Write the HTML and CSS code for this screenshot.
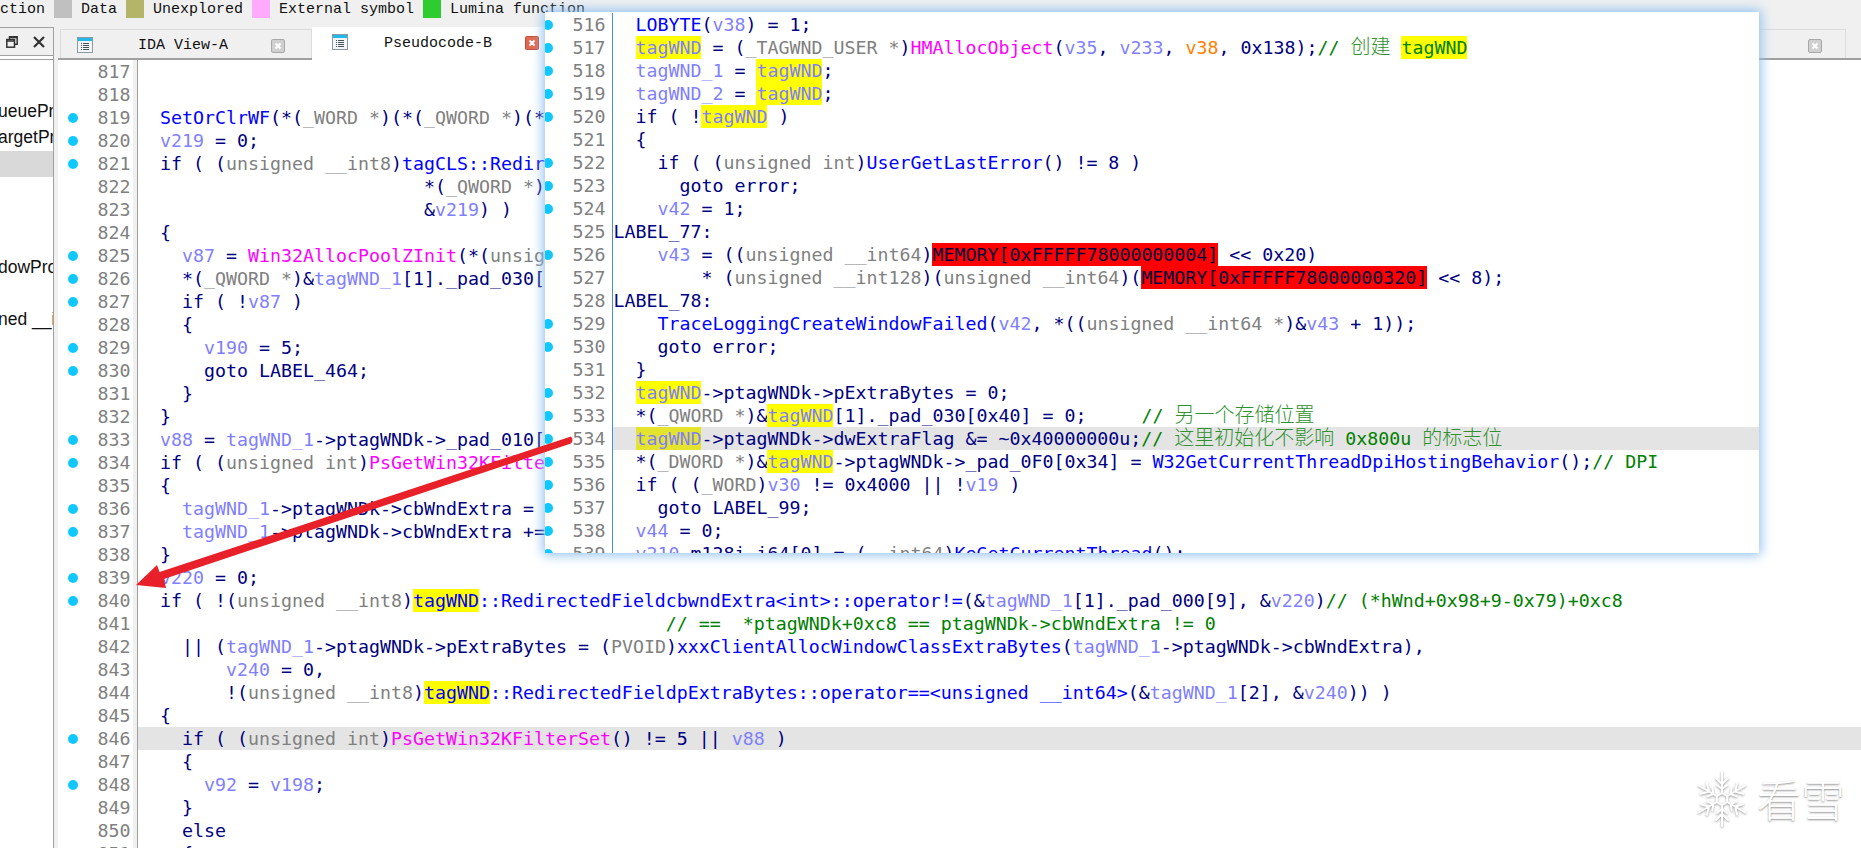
FILE: index.html
```html
<!DOCTYPE html>
<html lang="en">
<head>
<meta charset="utf-8">
<title>Pseudocode-B</title>
<link rel="stylesheet" href="styles.css">
</head>
<body>
<svg class="defs" width="0" height="0" aria-hidden="true"><defs>
<symbol id="tabicon" viewBox="0 0 16 16"><rect x=".5" y=".5" width="15" height="15" fill="#f2f4f6" stroke="#8b99a3"/><rect x="1" y="1" width="14" height="3" fill="#22b8e8"/><path d="M4 6.5h1M6 6.5h6M4 8.5h1M6 8.5h6M4 10.5h1M6 10.5h6M4 12.5h1M6 12.5h6" stroke="#44525c" fill="none"/></symbol>
<symbol id="closeicon" viewBox="0 0 14 14"><rect x=".5" y=".5" width="13" height="13" rx="1.5" fill="#d0d0d0" stroke="#a8a8a8"/><path d="M4.5 4.5l5 5M9.5 4.5l-5 5" stroke="#fff" stroke-width="2" fill="none"/></symbol>
<symbol id="closered" viewBox="0 0 14 14"><rect x=".5" y=".5" width="13" height="13" rx="1" fill="#e2694f" stroke="#b5533f"/><path d="M4.5 4.5l5 5M9.5 4.5l-5 5" stroke="#fff" stroke-width="2" fill="none"/></symbol>
</defs></svg>

<header class="legend">
  <span class="leg">ction</span><i class="sw sw-data"></i>
  <span class="leg">Data</span><i class="sw sw-unex"></i>
  <span class="leg">Unexplored</span><i class="sw sw-ext"></i>
  <span class="leg">External symbol</span><i class="sw sw-lum"></i>
  <span class="leg">Lumina function</span>
</header>

<div class="workspace">
  <aside class="side">
    <div class="side-head">
      <svg class="winbtn" viewBox="0 0 12 12"><path d="M3.5 3V.8h7.7v7.4H8.5" fill="none" stroke="#333" stroke-width="1.5"/><rect x=".8" y="3.5" width="7.7" height="7.7" fill="none" stroke="#333" stroke-width="1.5"/><path d="M.8 5h7.7M3.5 1.6h7.7" stroke="#333" stroke-width="1.5"/></svg>
      <svg class="winbtn" viewBox="0 0 12 12"><path d="M1 1l10 10M11 1L1 11" stroke="#333" stroke-width="2.2" fill="none"/></svg>
    </div>
    <div class="side-list">
      <div class="item"></div><div class="item"></div>
      <div class="item">ueuePr</div>
      <div class="item">argetPr</div>
      <div class="item sel"></div>
      <div class="item"></div><div class="item"></div><div class="item"></div>
      <div class="item">dowPro</div>
      <div class="item"></div>
      <div class="item">ned __i</div>
    </div>
  </aside>

  <main class="editor">
    <nav class="tabs">
      <div class="tab"><svg class="ti"><use href="#tabicon"/></svg><span class="tt">IDA View-A</span><svg class="tc"><use href="#closeicon"/></svg></div>
      <div class="tab active"><svg class="ti"><use href="#tabicon"/></svg><span class="tt">Pseudocode-B</span><svg class="tc"><use href="#closered"/></svg></div>
      <div class="tab rest"><svg class="tc"><use href="#closeicon"/></svg></div>
    </nav>
    <section class="code">
<div class="row"><div class="gut"><b>817</b></div><div class="src"></div></div>
<div class="row"><div class="gut"><b>818</b></div><div class="src"></div></div>
<div class="row"><div class="gut"><i></i><b>819</b></div><div class="src">  <u class="f">SetOrClrWF</u>(*(<u class="t">_WORD *</u>)(*(<u class="t">_QWORD *</u>)(*</div></div>
<div class="row"><div class="gut"><i></i><b>820</b></div><div class="src">  <u class="v">v219</u> = 0;</div></div>
<div class="row"><div class="gut"><i></i><b>821</b></div><div class="src">  if ( (<u class="t">unsigned __int8</u>)<u class="f">tagCLS::Redir</u></div></div>
<div class="row"><div class="gut"><b>822</b></div><div class="src">                          *(<u class="t">_QWORD *</u>)</div></div>
<div class="row"><div class="gut"><b>823</b></div><div class="src">                          &amp;<u class="v">v219</u>) )</div></div>
<div class="row"><div class="gut"><b>824</b></div><div class="src">  {</div></div>
<div class="row"><div class="gut"><i></i><b>825</b></div><div class="src">    <u class="v">v87</u> = <u class="m">Win32AllocPoolZInit</u>(*(<u class="t">unsig</u></div></div>
<div class="row"><div class="gut"><i></i><b>826</b></div><div class="src">    *(<u class="t">_QWORD *</u>)&amp;<u class="v">tagWND_1</u>[1]._pad_030[</div></div>
<div class="row"><div class="gut"><i></i><b>827</b></div><div class="src">    if ( !<u class="v">v87</u> )</div></div>
<div class="row"><div class="gut"><b>828</b></div><div class="src">    {</div></div>
<div class="row"><div class="gut"><i></i><b>829</b></div><div class="src">      <u class="v">v190</u> = 5;</div></div>
<div class="row"><div class="gut"><i></i><b>830</b></div><div class="src">      goto LABEL_464;</div></div>
<div class="row"><div class="gut"><b>831</b></div><div class="src">    }</div></div>
<div class="row"><div class="gut"><b>832</b></div><div class="src">  }</div></div>
<div class="row"><div class="gut"><i></i><b>833</b></div><div class="src">  <u class="v">v88</u> = <u class="v">tagWND_1</u>-&gt;ptagWNDk-&gt;_pad_010[</div></div>
<div class="row"><div class="gut"><i></i><b>834</b></div><div class="src">  if ( (<u class="t">unsigned int</u>)<u class="m">PsGetWin32KFilte</u></div></div>
<div class="row"><div class="gut"><b>835</b></div><div class="src">  {</div></div>
<div class="row"><div class="gut"><i></i><b>836</b></div><div class="src">    <u class="v">tagWND_1</u>-&gt;ptagWNDk-&gt;cbWndExtra =</div></div>
<div class="row"><div class="gut"><i></i><b>837</b></div><div class="src">    <u class="v">tagWND_1</u>-&gt;ptagWNDk-&gt;cbWndExtra +=</div></div>
<div class="row"><div class="gut"><b>838</b></div><div class="src">  }</div></div>
<div class="row"><div class="gut"><i></i><b>839</b></div><div class="src">  <u class="v">v220</u> = 0;</div></div>
<div class="row"><div class="gut"><i></i><b>840</b></div><div class="src">  if ( !(<u class="t">unsigned __int8</u>)<u class="f y">tagWND</u><u class="f">::RedirectedFieldcbwndExtra&lt;int&gt;::operator!=</u>(&amp;<u class="v">tagWND_1</u>[1]._pad_000[9], &amp;<u class="v">v220</u>)<u class="c">// (*hWnd+0x98+9-0x79)+0xc8</u></div></div>
<div class="row"><div class="gut"><b>841</b></div><div class="src">                                                <u class="c">// ==  *ptagWNDk+0xc8 == ptagWNDk-&gt;cbWndExtra != 0</u></div></div>
<div class="row"><div class="gut"><b>842</b></div><div class="src">    || (<u class="v">tagWND_1</u>-&gt;ptagWNDk-&gt;pExtraBytes = (<u class="t">PVOID</u>)<u class="f">xxxClientAllocWindowClassExtraBytes</u>(<u class="v">tagWND_1</u>-&gt;ptagWNDk-&gt;cbWndExtra),</div></div>
<div class="row"><div class="gut"><b>843</b></div><div class="src">        <u class="v">v240</u> = 0,</div></div>
<div class="row"><div class="gut"><b>844</b></div><div class="src">        !(<u class="t">unsigned __int8</u>)<u class="f y">tagWND</u><u class="f">::RedirectedFieldpExtraBytes::operator==&lt;unsigned __int64&gt;</u>(&amp;<u class="v">tagWND_1</u>[2], &amp;<u class="v">v240</u>)) )</div></div>
<div class="row"><div class="gut"><b>845</b></div><div class="src">  {</div></div>
<div class="row"><div class="gut"><i></i><b>846</b></div><div class="src hl">    if ( (<u class="t">unsigned int</u>)<u class="m">PsGetWin32KFilterSet</u>() != 5 || <u class="v">v88</u> )</div></div>
<div class="row"><div class="gut"><b>847</b></div><div class="src">    {</div></div>
<div class="row"><div class="gut"><i></i><b>848</b></div><div class="src">      <u class="v">v92</u> = <u class="v">v198</u>;</div></div>
<div class="row"><div class="gut"><b>849</b></div><div class="src">    }</div></div>
<div class="row"><div class="gut"><b>850</b></div><div class="src">    else</div></div>
<div class="row"><div class="gut"><b>851</b></div><div class="src">    {</div></div>
    </section>
  </main>
</div>

<section class="popup">
<div class="row"><div class="gut"><i></i><b>516</b></div><div class="src">  <u class="f">LOBYTE</u>(<u class="v">v38</u>) = 1;</div></div>
<div class="row"><div class="gut"><i></i><b>517</b></div><div class="src">  <u class="v y">tagWND</u> = (<u class="t">_TAGWND_USER *</u>)<u class="m">HMAllocObject</u>(<u class="v">v35</u>, <u class="v">v233</u>, <u class="o">v38</u>, 0x138);<u class="c">// <span class="cjk">创建</span> <u class="y">tagWND</u></u></div></div>
<div class="row"><div class="gut"><i></i><b>518</b></div><div class="src">  <u class="v">tagWND_1</u> = <u class="v y">tagWND</u>;</div></div>
<div class="row"><div class="gut"><i></i><b>519</b></div><div class="src">  <u class="v">tagWND_2</u> = <u class="v y">tagWND</u>;</div></div>
<div class="row"><div class="gut"><i></i><b>520</b></div><div class="src">  if ( !<u class="v y">tagWND</u> )</div></div>
<div class="row"><div class="gut"><b>521</b></div><div class="src">  {</div></div>
<div class="row"><div class="gut"><i></i><b>522</b></div><div class="src">    if ( (<u class="t">unsigned int</u>)<u class="f">UserGetLastError</u>() != 8 )</div></div>
<div class="row"><div class="gut"><i></i><b>523</b></div><div class="src">      goto error;</div></div>
<div class="row"><div class="gut"><i></i><b>524</b></div><div class="src">    <u class="v">v42</u> = 1;</div></div>
<div class="row"><div class="gut"><b>525</b></div><div class="src">LABEL_77:</div></div>
<div class="row"><div class="gut"><i></i><b>526</b></div><div class="src">    <u class="v">v43</u> = ((<u class="t">unsigned __int64</u>)<u class="r">MEMORY[0xFFFFF78000000004]</u> &lt;&lt; 0x20)</div></div>
<div class="row"><div class="gut"><b>527</b></div><div class="src">        * (<u class="t">unsigned __int128</u>)(<u class="t">unsigned __int64</u>)(<u class="r">MEMORY[0xFFFFF78000000320]</u> &lt;&lt; 8);</div></div>
<div class="row"><div class="gut"><b>528</b></div><div class="src">LABEL_78:</div></div>
<div class="row"><div class="gut"><i></i><b>529</b></div><div class="src">    <u class="f">TraceLoggingCreateWindowFailed</u>(<u class="v">v42</u>, *((<u class="t">unsigned __int64 *</u>)&amp;<u class="v">v43</u> + 1));</div></div>
<div class="row"><div class="gut"><i></i><b>530</b></div><div class="src">    goto error;</div></div>
<div class="row"><div class="gut"><b>531</b></div><div class="src">  }</div></div>
<div class="row"><div class="gut"><i></i><b>532</b></div><div class="src">  <u class="v y">tagWND</u>-&gt;ptagWNDk-&gt;pExtraBytes = 0;</div></div>
<div class="row"><div class="gut"><i></i><b>533</b></div><div class="src">  *(<u class="t">_QWORD *</u>)&amp;<u class="v y">tagWND</u>[1]._pad_030[0x40] = 0;     <u class="c">// <span class="cjk">另一个存储位置</span></u></div></div>
<div class="row"><div class="gut"><i></i><b>534</b></div><div class="src hl">  <u class="v yd">tagWND</u>-&gt;ptagWNDk-&gt;dwExtraFlag &amp;= ~0x40000000u;<u class="c">// <span class="cjk">这里初始化不影响</span> 0x800u <span class="cjk">的标志位</span></u></div></div>
<div class="row"><div class="gut"><i></i><b>535</b></div><div class="src">  *(<u class="t">_DWORD *</u>)&amp;<u class="v y">tagWND</u>-&gt;ptagWNDk-&gt;_pad_0F0[0x34] = <u class="f">W32GetCurrentThreadDpiHostingBehavior</u>();<u class="c">// DPI</u></div></div>
<div class="row"><div class="gut"><i></i><b>536</b></div><div class="src">  if ( (<u class="t">_WORD</u>)<u class="v">v30</u> != 0x4000 || !<u class="v">v19</u> )</div></div>
<div class="row"><div class="gut"><i></i><b>537</b></div><div class="src">    goto LABEL_99;</div></div>
<div class="row"><div class="gut"><i></i><b>538</b></div><div class="src">  <u class="v">v44</u> = 0;</div></div>
<div class="row"><div class="gut"><i></i><b>539</b></div><div class="src">  <u class="v">v210</u>.m128i_i64[0] = (<u class="t">__int64</u>)<u class="f">KeGetCurrentThread</u>();</div></div>
</section>

<svg class="arrow" viewBox="0 0 1861 848" aria-hidden="true">
  <path d="M571 436.5 Q574 440 571 443.5 L164 579 L166 588 L136 585 L157 565 L159.5 572 Z" fill="#e8202a"/>
</svg>

<div class="mark">
  <svg class="flake" viewBox="-30 -30 60 60" aria-hidden="true">
    <g fill="none" stroke="#fff" stroke-width="2" stroke-linecap="round">
      <path id="a1" d="M0-6V-27M-6-21L0-15L6-21M-5-14L0-10L5-14"/>
      <use href="#a1" transform="rotate(60)"/><use href="#a1" transform="rotate(120)"/><use href="#a1" transform="rotate(180)"/><use href="#a1" transform="rotate(240)"/><use href="#a1" transform="rotate(300)"/>
      <path d="M0-6L5.2-3V3L0 6L-5.2 3V-3Z"/>
    </g>
  </svg>
  <span class="mark-text">看雪</span>
</div>
</body>
</html>
```
FILE: styles.css
```css
html, body {
  margin: 0;
  padding: 0;
  background: #fff;
}
body {
  position: relative;
  width: 1861px;
  height: 848px;
  overflow: hidden;
  font-family: "Liberation Mono", monospace;
}
.defs { position: absolute; }

/* legend strip */
.legend {
  display: flex;
  align-items: flex-start;
  height: 27px;
  background: #f0f0f0;
  font-size: 15px;
  line-height: 20px;
  color: #111;
  white-space: pre;
}
.leg { padding: 0 9px 0 9px; }
.leg:first-child { padding-left: 0; }
.sw { display: block; width: 18px; height: 18px; }
.sw-data { background: #c0c0c0; }
.sw-unex { background: #b5b56a; }
.sw-ext { background: #ffaaff; }
.sw-lum { background: #2ecc2e; }

/* layout */
.workspace {
  display: flex;
  height: 821px;
  background: #f0f0f0;
}
.side {
  width: 53px;
  flex: none;
  background: #fff;
  border-right: 1px solid #a0a0a0;
  display: flex;
  flex-direction: column;
}
.side-head {
  height: 29px;
  box-sizing: border-box;
  background: #f0f0f0;
  border-top: 1px solid #a0a0a0;
  border-bottom: 1px solid #a0a0a0;
  display: flex;
  align-items: center;
  justify-content: flex-end;
  gap: 15px;
  padding-right: 8px;
  margin-bottom: 3px;
}
.winbtn { width: 12px; height: 12px; }
.side-list { border-top: 1px solid #a0a0a0; }
.item {
  height: 26px;
  font: 17.5px/24px "Liberation Sans", sans-serif;
  color: #111;
  white-space: pre;
  overflow: hidden;
  text-indent: -2px;
}
.item.sel { background: #d9d9d9; }
.side-list .item:first-child { height: 13px; }

.editor {
  flex: 1;
  min-width: 0;
  display: flex;
  flex-direction: column;
  padding-left: 4px;
}
.tabs {
  display: flex;
  height: 33px;
  flex: none;
  box-sizing: border-box;
  border-bottom: 2px solid #a0a0a0;
  font-size: 15px;
  color: #111;
}
.tab {
  position: relative;
  display: flex;
  align-items: center;
  width: 252px;
  height: 29px;
  margin-top: 2px;
  flex: none;
  box-sizing: border-box;
  background: #f0f0f0;
  border: 1px solid #dcdcdc;
  border-bottom: none;
}
.tab:first-child { margin-left: 2px; }
.tab.active {
  height: 33px;
  margin-top: 0;
  background: #fff;
  border: none;
}
.tab.rest {
  flex: 1;
  justify-content: flex-end;
  padding-right: 23px;
  margin-right: 15px;
}
.ti { width: 16px; height: 16px; margin-left: 16px; margin-top: 1px; flex: none; }
.tt { margin-left: 45px; margin-top: 3px; width: 138px; flex: none; }
.tc { width: 14px; height: 14px; margin-top: 3px; flex: none; }
.tab.active .ti { margin-left: 20px; margin-top: -3px; }
.tab.active .tt { margin-left: 36px; margin-top: -1px; width: 148px; }
.tab.active .tc { margin-top: -1px; }
.tab:not(.rest) .tt + .tc { margin-left: -5px; }
.tab.active .tt + .tc { margin-left: -7px; }

/* code views */
.code {
  flex: 1;
  background: #fff;
  overflow: hidden;
  font-family: "DejaVu Sans Mono", monospace;
  font-size: 18.27px;
  line-height: 23px;
  color: #000080;
}
.row { display: flex; height: 23px; }
.gut {
  width: 80px;
  flex: none;
  box-sizing: border-box;
  display: flex;
  align-items: center;
  padding-left: 9.5px;
  padding-right: 6.5px;
  border-right: 1px solid #a0a0a0;
  box-shadow: inset -4px 0 0 #f0f0f0;
}
.gut i {
  width: 10px;
  height: 10px;
  border-radius: 50%;
  background: #10c8ff;
  flex: none;
}
.gut b {
  margin-left: auto;
  font-weight: normal;
  color: #808080;
}
.src {
  flex: 1;
  min-width: 0;
  height: 23px;
  white-space: pre;
  overflow: hidden;
}
.hl { background: #e4e4e4; }

u { text-decoration: none; }
.t { color: #808080; }
.v { color: #7f7fff; }
.f { color: #0000ff; }
.m { color: #ff00ff; }
.o { color: #ff8000; }
.c { color: #008000; }
.y, .yd, .r {
  display: inline-block;
  height: 23px;
  line-height: 23px;
}
.y { background: #ffff00; }
.yd { background: #e4e42c; }
.r { background: #ff0000; color: #000040; }
.cjk {
  font-family: "Noto Sans CJK SC", sans-serif;
  font-size: 20px;
  line-height: 18px;
  font-weight: 300;
  color: #2f922f;
}

/* peek popup */
.popup {
  position: absolute;
  left: 545px;
  top: 12px;
  width: 1214px;
  height: 541px;
  box-sizing: border-box;
  padding-top: 1px;
  background: #fff;
  overflow: hidden;
  box-shadow: 0 0 11px 2px #8fc0f2;
  font-family: "DejaVu Sans Mono", monospace;
  font-size: 18.27px;
  line-height: 23px;
  color: #000080;
}
.popup .gut {
  width: 68px;
  padding-left: 0;
  padding-right: 6.5px;
  border-right: 1px solid #3f94d8;
  box-shadow: none;
}
.popup .gut i { margin-left: -2.5px; }
.popup .src { padding-left: .5px; }

/* annotation overlay */
.arrow {
  position: absolute;
  left: 0;
  top: 0;
  width: 1861px;
  height: 848px;
  pointer-events: none;
}

/* watermark */
.mark {
  position: absolute;
  left: 1692px;
  top: 769px;
  display: flex;
  align-items: center;
  gap: 5px;
}
.flake {
  width: 60px;
  height: 60px;
  filter: drop-shadow(0 1px 1px rgba(0, 0, 0, .4));
}
.mark-text {
  font-family: "Noto Sans CJK SC", sans-serif;
  font-size: 44px;
  font-weight: 300;
  line-height: 60px;
  margin-top: -2px;
  color: #fff;
  text-shadow: 0 1px 2px rgba(0, 0, 0, .45);
}
```
